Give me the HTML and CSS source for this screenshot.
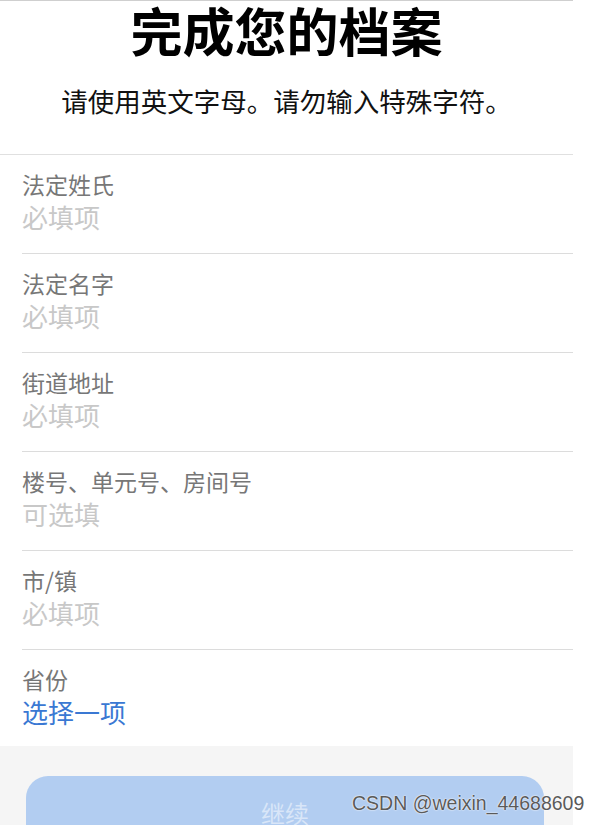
FILE: index.html
```html
<!DOCTYPE html>
<html lang="zh-CN">
<head>
<meta charset="utf-8">
<title>完成您的档案</title>
<link rel="stylesheet" href="styles.css">
</head>
<body>
<div class="page">
  <header class="header">
    <h1 class="title">完成您的档案</h1>
    <p class="subtitle">请使用英文字母。请勿输入特殊字符。</p>
  </header>
  <div class="form">
    <div class="row">
      <div class="label">法定姓氏</div>
      <div class="value placeholder">必填项</div>
    </div>
    <div class="row">
      <div class="label">法定名字</div>
      <div class="value placeholder">必填项</div>
    </div>
    <div class="row">
      <div class="label">街道地址</div>
      <div class="value placeholder">必填项</div>
    </div>
    <div class="row">
      <div class="label">楼号、单元号、房间号</div>
      <div class="value placeholder">可选填</div>
    </div>
    <div class="row">
      <div class="label">市/镇</div>
      <div class="value placeholder">必填项</div>
    </div>
    <div class="row last">
      <div class="label">省份</div>
      <div class="value link">选择一项</div>
    </div>
  </div>
  <footer class="footer">
    <button class="btn" type="button">继续</button>
  </footer>
</div>
<div class="watermark">CSDN @weixin_44688609</div>
</body>
</html>
```
FILE: styles.css
```css
html, body {
  margin: 0;
  padding: 0;
  background: #ffffff;
  height: 825px;
  overflow: hidden;
}
body {
  font-family: "Noto Sans CJK SC", "Noto Sans", sans-serif;
  position: relative;
}
.page {
  width: 573px;
  background: #ffffff;
}
.header {
  border-top: 1px solid #cfcfcf;
  border-bottom: 1px solid #e0e0e0;
  height: 153px;
  box-sizing: content-box;
  text-align: center;
}
.title {
  margin: -3px 0 0;
  font-size: 52px;
  line-height: 64px;
  font-weight: 700;
  color: #000;
}
.subtitle {
  margin: 21px 0 0;
  font-size: 26.5px;
  line-height: 36px;
  color: #111;
}
.form {
  padding-left: 22px;
}
.row {
  border-bottom: 1px solid #dcdcdc;
  padding: 15px 0 20px;
  display: flex;
  flex-direction: column;
  gap: 2px;
}
.row.last {
  border-bottom: none;
  padding-bottom: 18px;
}
.label {
  font-size: 23px;
  line-height: 29px;
  color: #777777;
}
.value {
  font-size: 26px;
  line-height: 32px;
}
.placeholder {
  color: #c8c8c8;
}
.link {
  color: #3a78d3;
}
.footer {
  background: #f5f5f5;
  padding: 30px 29px 40px 26px;
}
.btn {
  display: block;
  width: 100%;
  height: 74px;
  border: none;
  border-radius: 22px;
  background: #b2cdf1;
  color: #d9e6f8;
  font-family: "Noto Sans CJK SC", sans-serif;
  font-size: 24px;
  line-height: 74px;
  padding: 0;
}
.watermark {
  position: absolute;
  left: 352px;
  top: 792px;
  font-family: "Liberation Sans", sans-serif;
  font-size: 19.5px;
  color: #5a5a5a;
  text-shadow: 0 0 2px #fff, 0 0 1px #fff;
  white-space: nowrap;
}
```
